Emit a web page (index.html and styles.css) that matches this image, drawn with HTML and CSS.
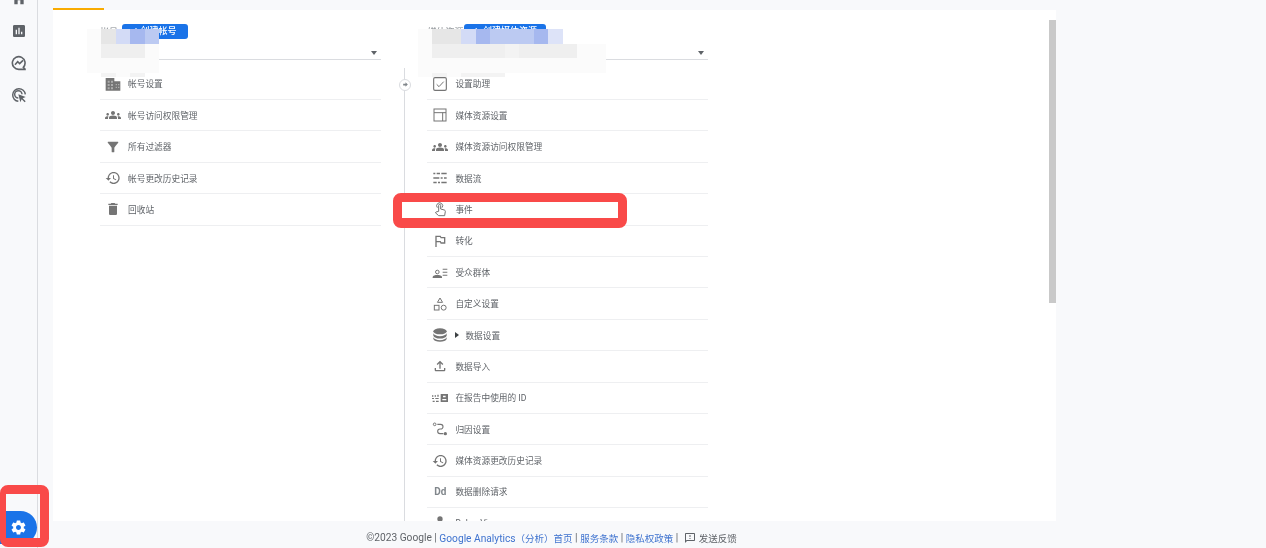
FILE: index.html
```html
<!DOCTYPE html>
<html lang="zh-CN">
<head>
    <meta charset="UTF-8">
    <title>Google Analytics 管理</title>
    <link rel="stylesheet" href="styles.css">
</head>
<body>
<div class="app">
    <nav class="rail">
        <div class="rail-icons">
            <svg class="rail-icon" viewBox="0 0 24 24"><path d="M10 20v-6h4v6h5v-8h3L12 3 2 12h3v8z"/></svg>
            <svg class="rail-icon" viewBox="0 0 24 24"><path d="M19 3H5c-1.1 0-2 .9-2 2v14c0 1.1.9 2 2 2h14c1.1 0 2-.9 2-2V5c0-1.1-.9-2-2-2zM9 17H7v-7h2v7zm4 0h-2V7h2v10zm4 0h-2v-4h2v4z"/></svg>
            <svg class="rail-icon" viewBox="0 0 24 24"><path class="line" stroke-width="2.4" d="M21 21l-2.5-2.5A9.5 9.5 0 1 0 12 21.5h9z"/><path class="line" stroke-width="2.4" d="M6 14.5l4-4.500 3 3 5-5"/></svg>
            <svg class="rail-icon" viewBox="0 0 24 24"><path class="line" stroke-width="2.2" d="M11 21.500A9.500 9.500 0 1 1 21.500 11"/><path class="line" stroke-width="2.2" d="M11 16.500A5.500 5.500 0 1 1 16.500 11"/><path d="M11 11l11 4-4.500 2 4.500 4.500-1.500 1.500-4.500-4.500-2 4.500z"/></svg>
        </div>
        <div class="settings-tab">
            <svg class="gear" viewBox="0 0 24 24"><path d="M19.430 12.980c.04-.32.07-.64.07-.98s-.03-.66-.07-.98l2.110-1.650c.19-.15.24-.42.12-.64l-2-3.460c-.12-.22-.39-.3-.61-.22l-2.490 1c-.52-.4-1.080-.73-1.690-.98l-.38-2.650C14.460 2.180 14.250 2 14 2h-4c-.25 0-.46.18-.49.42l-.38 2.650c-.61.25-1.170.59-1.690.98l-2.490-1c-.23-.09-.49 0-.61.22l-2 3.460c-.13.22-.07.49.12.64l2.110 1.650c-.04.32-.07.65-.07.98s.03.66.07.98l-2.110 1.650c-.19.15-.24.42-.12.64l2 3.460c.12.22.39.3.61.22l2.490-1c.52.4 1.080.73 1.690.98l.38 2.650c.03.24.24.42.49.42h4c.25 0 .46-.18.49-.42l.38-2.650c.61-.25 1.170-.59 1.690-.98l2.490 1c.23.09.49 0 .61-.22l2-3.460c.12-.22.07-.49-.12-.64l-2.110-1.650zM12 15.500c-1.930 0-3.500-1.570-3.500-3.500s1.570-3.500 3.500-3.500 3.500 1.570 3.500 3.500-1.570 3.500-3.500 3.500z"/></svg>
        </div>
    </nav>

    <div class="main">
        <div class="tab-line"></div>
        <section class="card">
            <div class="columns">
                <div class="col">
                    <div class="col-head">
                        <div class="head-top">
                            <span class="head-label head-label-short">帐号</span>
                            <span class="create-btn create-btn-account">+ 创建帐号</span>
                        </div>
                        <div class="picker"><span class="caret"></span></div>
                        <div class="mosaic mosaic-account">
                            <i class="m0"></i><i class="m2"></i><i class="m3"></i><i class="m5"></i><i class="m7"></i>
                            <i class="m0"></i><i class="m1"></i><i class="m1"></i><i class="m1"></i><i class="m0"></i>
                            <i class="m0"></i><i class="m0"></i><i class="m0"></i><i class="m0"></i><i class="m0"></i>
                            <i></i><i class="m6"></i><i class="m0"></i><i class="m6"></i><i></i>
                        </div>
                    </div>
                    <ul class="menu">
                        <li class="menu-row">
                            <svg class="icon" viewBox="0 0 24 24"><path d="M1 3h13v5h9v14H1z"/><path class="hole" d="M4 7h3v3H4zm5 0h3v3H9zm-5 5h3v3H4zm5 0h3v3H9zm7-0h2v2h-2zm3.500 0h2v2h-2zm-3.500 4h2v2h-2zm3.500 0h2v2h-2zM4 17h3v3H4zm5 0h3v3H9z"/></svg>
                            <span>帐号设置</span>
                        </li>
                        <li class="menu-row">
                            <svg class="icon" viewBox="0 0 24 24"><path d="M12 12.750c1.630 0 3.070.39 4.240.9 1.080.48 1.760 1.560 1.760 2.730V18H6v-1.610c0-1.180.68-2.260 1.760-2.730 1.170-.52 2.610-.91 4.240-.91zM4 13c1.100 0 2-.9 2-2s-.9-2-2-2-2 .9-2 2 .9 2 2 2zm1.130 1.100c-.37-.06-.74-.1-1.130-.1-.99 0-1.930.21-2.780.58C.48 14.900 0 15.620 0 16.430V18h4.500v-1.610c0-.83.23-1.610.63-2.290zM20 13c1.100 0 2-.9 2-2s-.9-2-2-2-2 .9-2 2 .9 2 2 2zm4 3.430c0-.81-.48-1.530-1.220-1.850-.85-.37-1.790-.58-2.780-.58-.39 0-.76.04-1.130.1.4.68.63 1.460.63 2.290V18H24v-1.570zM12 6c1.660 0 3 1.340 3 3s-1.340 3-3 3-3-1.340-3-3 1.340-3 3-3z"/></svg>
                            <span>帐号访问权限管理</span>
                        </li>
                        <li class="menu-row">
                            <svg class="icon" viewBox="0 0 24 24"><path d="M4.250 5.610C6.270 8.200 10 13 10 13v6c0 .55.45 1 1 1h2c.55 0 1-.45 1-1v-6s3.720-4.800 5.740-7.390c.51-.66.04-1.610-.79-1.610H5.040c-.83 0-1.300.95-.79 1.610z"/></svg>
                            <span>所有过滤器</span>
                        </li>
                        <li class="menu-row">
                            <svg class="icon" viewBox="0 0 24 24"><path d="M13 3c-4.970 0-9 4.030-9 9H1l3.890 3.890.07.14L9 12H6c0-3.870 3.130-7 7-7s7 3.130 7 7-3.130 7-7 7c-1.930 0-3.680-.79-4.940-2.060l-1.420 1.420C8.270 19.990 10.510 21 13 21c4.970 0 9-4.030 9-9s-4.030-9-9-9zm-1 5v5l4.280 2.540.72-1.210-3.500-2.080V8H12z"/></svg>
                            <span>帐号更改历史记录</span>
                        </li>
                        <li class="menu-row">
                            <svg class="icon" viewBox="0 0 24 24"><path d="M6 19c0 1.100.9 2 2 2h8c1.100 0 2-.9 2-2V7H6v12zM19 4h-3.500l-1-1h-5l-1 1H5v2h14V4z"/></svg>
                            <span>回收站</span>
                        </li>
                    </ul>
                </div>

                <div class="col-sep">
                    <span class="sep-dot"><svg viewBox="0 0 24 24"><path d="M12 4l8 8-8 8v-5H4V9h8z"/></svg></span>
                </div>

                <div class="col">
                    <div class="col-head">
                        <div class="head-top">
                            <span class="head-label head-label-long">媒体资源</span>
                            <span class="create-btn create-btn-property">+ &nbsp;创建媒体资源</span>
                        </div>
                        <div class="picker"><span class="caret"></span></div>
                        <div class="mosaic mosaic-property">
                            <i class="m0"></i><i class="m2"></i><i class="m2"></i><i class="m3"></i><i class="m5"></i><i class="m7"></i><i class="m7"></i><i class="m7"></i><i class="m5"></i><i class="m4"></i><i></i><i></i><i></i>
                            <i class="m0"></i><i class="m1"></i><i class="m1"></i><i class="m1"></i><i class="m1"></i><i class="m1"></i><i class="m6"></i><i class="m1"></i><i class="m1"></i><i class="m1"></i><i class="m1"></i><i class="m0"></i><i class="m0"></i>
                            <i class="m0"></i><i class="m0"></i><i class="m0"></i><i class="m0"></i><i class="m0"></i><i class="m0"></i><i class="m0"></i><i class="m0"></i><i class="m0"></i><i class="m0"></i><i class="m0"></i><i class="m0"></i><i class="m0"></i>
                            <i class="m0"></i><i class="m6"></i><i class="m0"></i><i class="m6"></i><i class="m6"></i><i class="m6"></i><i></i><i></i><i></i><i></i><i></i><i></i><i></i>
                        </div>
                    </div>
                    <ul class="menu">
                        <li class="menu-row">
                            <svg class="icon" viewBox="0 0 24 24"><rect class="line" stroke-width="1.700" x="2.500" y="2.500" width="19" height="19" rx="2"/><path class="line" stroke-width="1.500" d="M7 12.500l3.500 3.500 7-7.500"/></svg>
                            <span>设置助理</span>
                        </li>
                        <li class="menu-row">
                            <svg class="icon" viewBox="0 0 24 24"><rect class="line" stroke-width="1.500" x="3" y="3" width="18" height="18"/><path class="line" stroke-width="1.500" d="M3 8.500h18M16 8.500V21"/></svg>
                            <span>媒体资源设置</span>
                        </li>
                        <li class="menu-row">
                            <svg class="icon" viewBox="0 0 24 24"><path d="M12 12.750c1.630 0 3.070.39 4.240.9 1.080.48 1.760 1.560 1.760 2.730V18H6v-1.610c0-1.180.68-2.260 1.760-2.730 1.170-.52 2.610-.91 4.240-.91zM4 13c1.100 0 2-.9 2-2s-.9-2-2-2-2 .9-2 2 .9 2 2 2zm1.130 1.100c-.37-.06-.74-.1-1.130-.1-.99 0-1.930.21-2.780.58C.48 14.900 0 15.620 0 16.430V18h4.500v-1.610c0-.83.23-1.610.63-2.290zM20 13c1.100 0 2-.9 2-2s-.9-2-2-2-2 .9-2 2 .9 2 2 2zm4 3.430c0-.81-.48-1.530-1.220-1.850-.85-.37-1.790-.58-2.780-.58-.39 0-.76.04-1.130.1.4.68.63 1.460.63 2.290V18H24v-1.570zM12 6c1.660 0 3 1.340 3 3s-1.340 3-3 3-3-1.340-3-3 1.340-3 3-3z"/></svg>
                            <span>媒体资源访问权限管理</span>
                        </li>
                        <li class="menu-row">
                            <svg class="icon" viewBox="0 0 24 24"><path d="M2 4h3v2.500H2zm5 0h5v2.500H7zm7 0h8v2.500h-8zM2 10.700h9v2.500H2zm11 0h3v2.500h-3zm5 0h4v2.500h-4zM2 17.500h5V20H2zm7 0h3V20H9zm5 0h8V20h-8z"/></svg>
                            <span>数据流</span>
                        </li>
                        <li class="menu-row">
                            <svg class="icon icon-touch" viewBox="0 0 24 24"><path class="line" stroke-width="1.500" d="M8 10a4.500 4.500 0 1 1 7 0"/><path class="line" stroke-width="1.500" d="M10 15.500V6.500a1.500 1.500 0 0 1 3 0V12l5.500 1.500c1 .3 1.500 1 1.500 2L19 22H10l-5-4.500 1-1z"/></svg>
                            <span>事件</span>
                        </li>
                        <li class="menu-row">
                            <svg class="icon" viewBox="0 0 24 24"><path d="M14 6l-1-2H5v17h2v-7h5l1 2h7V6h-6zm4 8h-4l-1-2H7V6h5l1 2h5v6z"/></svg>
                            <span>转化</span>
                        </li>
                        <li class="menu-row">
                            <svg class="icon" viewBox="0 0 24 24"><path d="M16 7h7v1.500h-7zm0 4.500h7V13h-7zm0 4.500h7v1.500h-7z"/><circle class="line" stroke-width="1.500" cx="8" cy="12" r="2.700"/><path d="M1 21v-1.500c0-2 4-3 7-3s7 1 7 3V21z"/></svg>
                            <span>受众群体</span>
                        </li>
                        <li class="menu-row">
                            <svg class="icon" viewBox="0 0 24 24"><path class="line" stroke-width="1.500" d="M12 3l3.800 6.500H8.200z"/><rect class="line" stroke-width="1.500" x="3.500" y="14" width="7" height="7"/><circle class="line" stroke-width="1.500" cx="17.500" cy="17.500" r="3.700"/></svg>
                            <span>自定义设置</span>
                        </li>
                        <li class="menu-row">
                            <svg class="icon" viewBox="0 0 24 24"><ellipse cx="12" cy="6.500" rx="10" ry="4.500"/><path d="M2 9.500c1 2.800 5 4.200 10 4.200s9-1.400 10-4.200V13c-1 2.800-5 4.200-10 4.200S3 15.800 2 13zm0 6c1 2.800 5 4.200 10 4.200s9-1.400 10-4.200V18c-1 2.800-5 4-10 4s-9-1.200-10-4z"/></svg>
                            <span class="expander"></span><span>数据设置</span>
                        </li>
                        <li class="menu-row">
                            <svg class="icon" viewBox="0 0 24 24"><path d="M18 15v3H6v-3H4v3c0 1.100.9 2 2 2h12c1.100 0 2-.9 2-2v-3h-2zM7 9l1.410 1.410L11 7.830V16h2V7.830l2.590 2.580L17 9l-5-5-5 5z"/></svg>
                            <span>数据导入</span>
                        </li>
                        <li class="menu-row">
                            <svg class="icon" viewBox="0 0 24 24"><path d="M0 8h2v2H0zm4 0h2v2H4zm4-1h2v3H8zM0 12h3v1.500H0zm5 0h5v1.500H5zM1 16h3v2H1zm5 0h4v2H6z"/><path d="M13 6h11v12H13zm3.500 2.500v2.500h4V8.500zm-1 5v2h6v-2z" fill-rule="evenodd"/></svg>
                            <span>在报告中使用的 ID</span>
                        </li>
                        <li class="menu-row">
                            <svg class="icon" viewBox="0 0 24 24"><circle class="line" stroke-width="1.500" cx="4" cy="5" r="2"/><circle cx="20" cy="19" r="2.500"/><path class="line" stroke-width="1.700" d="M8 5h5a3.500 3.500 0 0 1 0 7h-1a3.500 3.500 0 0 0 0 7h5"/></svg>
                            <span>归因设置</span>
                        </li>
                        <li class="menu-row">
                            <svg class="icon" viewBox="0 0 24 24"><path d="M13 3c-4.970 0-9 4.030-9 9H1l3.890 3.890.07.14L9 12H6c0-3.870 3.130-7 7-7s7 3.130 7 7-3.130 7-7 7c-1.930 0-3.680-.79-4.940-2.060l-1.420 1.420C8.270 19.990 10.510 21 13 21c4.970 0 9-4.030 9-9s-4.030-9-9-9zm-1 5v5l4.280 2.540.72-1.210-3.500-2.080V8H12z"/></svg>
                            <span>媒体资源更改历史记录</span>
                        </li>
                        <li class="menu-row">
                            <span class="icon icon-text">Dd</span>
                            <span>数据删除请求</span>
                        </li>
                        <li class="menu-row">
                            <svg class="icon" viewBox="0 0 24 24"><circle cx="12" cy="6" r="4"/><path d="M10.500 10h3v12h-3z"/></svg>
                            <span>DebugView</span>
                        </li>
                    </ul>
                </div>
            </div>
            <div class="scroll-thumb"></div>
        </section>
        <footer class="foot">
            <span>©2023 Google | </span><a class="foot-link">Google Analytics<span class="foot-cjk">（分析）首页</span></a><span> | </span><a class="foot-link foot-cjk">服务条款</a><span> | </span><a class="foot-link foot-cjk">隐私权政策</a><span> | </span>
            <svg class="foot-icon" viewBox="0 0 24 24"><path d="M20 2H4c-1.100 0-2 .9-2 2v18l4-4h14c1.100 0 2-.9 2-2V4c0-1.100-.9-2-2-2zm0 14H5.200L4 17.200V4h16v12zM11 12h2v2h-2zm0-6h2v4h-2z"/></svg>
            <span class="foot-cjk">发送反馈</span>
        </footer>
    </div>
</div>
<div class="callout callout-gear"></div>
<div class="callout callout-events"></div>
</body>
</html>
```

FILE: styles.css
```css
html,body{
    margin: 0;
    padding: 0;
    height: 548px;
    overflow: hidden;
    background-color: #f8f9fb;
}
body{
    position: relative;
    font-family: "Roboto","Noto Sans CJK SC",sans-serif;
    color: #5f6368;
}
.app{
    display: flex;
    height: 548px;
    overflow: hidden;
    filter: blur(.5px);
}
svg{
    fill: currentColor;
}
svg .line{
    fill: none;
    stroke: currentColor;
}
svg .hole{
    fill: #fff;
    opacity: .4;
}

/* left rail */
.rail{
    position: relative;
    flex: none;
    width: 37px;
    border-right: 1px solid #dadce0;
}
.rail-icons{
    display: flex;
    flex-direction: column;
    align-items: center;
    margin-top: -17px;
}
.rail-icon{
    width: 16px;
    height: 16px;
    padding: 8px 0;
    color: #5f6368;
}
.settings-tab{
    position: absolute;
    left: 0;
    top: 511px;
    width: 37px;
    height: 33px;
    display: flex;
    align-items: center;
    justify-content: center;
    border-radius: 0 17px 17px 0;
    background-color: #1a73e8;
    color: #fff;
}
.gear{
    width: 17px;
    height: 17px;
}

/* main */
.main{
    flex: 1;
    min-width: 0;
}
.tab-line{
    width: 51px;
    height: 2px;
    margin: 8px 0 0 15px;
    background-color: #f9ab00;
}
.card{
    position: relative;
    width: 1003px;
    height: 511px;
    margin-left: 15px;
    overflow: hidden;
    background-color: #fff;
}
.columns{
    display: flex;
    padding-left: 47px;
}
.col{
    width: 281px;
}
.col-head{
    position: relative;
    height: 58.7px;
}
.head-top{
    display: flex;
    align-items: center;
    height: 15px;
    padding-top: 14px;
}
.head-label{
    font-size: 9px;
    color: #80868b;
}
.head-label-short{
    width: 22px;
}
.head-label-long{
    width: 37px;
}
.create-btn{
    box-sizing: border-box;
    height: 15px;
    line-height: 15px;
    border-radius: 3px;
    background-color: #1a73e8;
    color: #fff;
    font-size: 9px;
    font-weight: 500;
    text-align: center;
}
.create-btn-account{
    width: 66px;
}
.create-btn-property{
    width: 82px;
}
.picker{
    position: relative;
    height: 20px;
    border-bottom: 1px solid #dadce0;
}
.caret{
    position: absolute;
    right: 4px;
    top: 12px;
    border-top: 4px solid #5f6368;
    border-left: 3px solid transparent;
    border-right: 3px solid transparent;
}

/* pixelated block over the account names */
.mosaic{
    position: absolute;
    top: 19px;
    display: grid;
    grid-auto-rows: 14.5px;
    grid-template-columns: repeat(5,14.5px);
}
.mosaic-account{
    left: -13.5px;
}
.mosaic-property{
    left: -9.5px;
    grid-template-columns: repeat(13,14.5px);
}
.mosaic-account i:nth-last-child(-n+5){
    height: 4px;
}
.mosaic-property i:nth-last-child(-n+13){
    height: 4px;
}
.m0{background-color: #fbfbfb;}
.m1{background-color: #efefef;}
.m2{background-color: #e6e6e6;}
.m3{background-color: #d3dbf6;}
.m4{background-color: #dde3f8;}
.m5{background-color: #a6b8ef;}
.m6{background-color: #f3f3f3;}
.m7{background-color: #bccaf2;}

/* menu rows */
.menu{
    list-style: none;
    margin: 0;
    padding: 0;
}
.menu-row{
    box-sizing: border-box;
    display: flex;
    align-items: center;
    height: 31.4px;
    padding-left: 5px;
    border-bottom: 1px solid #eeeff1;
    font-size: 8.7px;
    color: #5f6368;
}
.icon{
    flex: none;
    width: 16px;
    height: 16px;
    margin-right: 7px;
    color: #757575;
}
.icon-touch{
    height: 18px;
}
.icon-text{
    font-family: "Roboto",sans-serif;
    font-size: 10px;
    font-weight: 700;
    line-height: 16px;
    text-align: center;
    color: #80868b;
}
.expander{
    width: 0;
    height: 0;
    margin-right: 6px;
    border-left: 4px solid #3c4043;
    border-top: 3px solid transparent;
    border-bottom: 3px solid transparent;
}
.col-sep{
    position: relative;
    box-sizing: border-box;
    width: 46.4px;
    margin-top: 58px;
    padding-left: 23px;
}
.col-sep::before{
    content: "";
    display: block;
    width: 1px;
    height: 460px;
    background-color: #dadce0;
}
.sep-dot{
    position: absolute;
    left: 18px;
    top: 10.500px;
    box-sizing: border-box;
    width: 12px;
    height: 12px;
    padding: 1.500px;
    border: 1px solid #dadce0;
    border-radius: 50%;
    background-color: #fff;
    color: #80868b;
}
.sep-dot svg{
    display: block;
    width: 7px;
    height: 7px;
}
.scroll-thumb{
    position: absolute;
    right: 0;
    top: 10px;
    width: 7px;
    height: 283px;
    background-color: #c9c9c9;
}

/* footer */
.foot{
    display: flex;
    align-items: center;
    justify-content: center;
    width: 1003px;
    height: 27px;
    padding-top: 3px;
    margin-left: 12px;
    font-size: 10.2px;
    white-space: pre;
    color: #5f6368;
}
.foot-link{
    color: #3f73cf;
}
.foot-cjk{
    font-size: 9.500px;
}
.foot-icon{
    width: 12px;
    height: 12px;
    margin: 0 3px 0 3px;
}

/* red annotation boxes */
.callout{
    position: absolute;
    box-sizing: border-box;
    border: 9px solid #f94a49;
    border-radius: 8px;
}
.callout-gear{
    left: 0;
    top: 485px;
    width: 49px;
    height: 62px;
    border-left-width: 6px;
}
.callout-events{
    left: 393px;
    top: 193px;
    width: 234px;
    height: 35px;
    border-bottom-width: 10px;
}
.callout-events::before{
    content: "";
    position: absolute;
    left: 0;
    top: 0;
    width: 8px;
    height: 100%;
    background-color: #fff;
}
```
